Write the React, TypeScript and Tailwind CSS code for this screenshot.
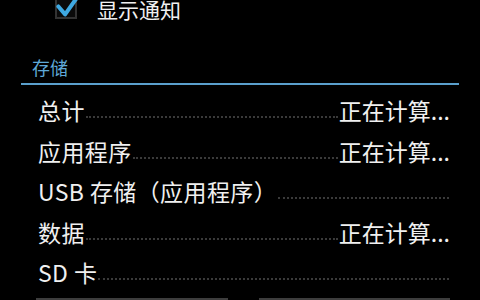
import React from "react";

const rows: { label: string; value: string }[] = [
  { label: "总计", value: "正在计算..." },
  { label: "应用程序", value: "正在计算..." },
  { label: "USB 存储（应用程序）", value: "" },
  { label: "数据", value: "正在计算..." },
  { label: "SD 卡", value: "" },
];

export default function App() {
  return (
    <div
      className="relative w-[480px] h-[300px] overflow-hidden bg-black text-[#f0f0f0]"
      style={{ fontFamily: '"Noto Sans CJK SC", "Noto Sans", sans-serif' }}
    >
      {/* checkbox row (cut at top) */}
      <div className="flex items-center h-[22px] -mt-[2px] pl-[55px]">
        <div className="relative w-[22px] h-[22px] -mt-[2px] border-2 border-[#333] bg-[#0a0a0a]">
          <svg
            viewBox="0 0 24 24"
            className="absolute -left-[2px] -top-[6px] w-[27px] h-[27px]"
          >
            <path
              d="M3 12 L9 19 L21 2"
              fill="none"
              stroke="#3fa9e2"
              strokeWidth="3.6"
              strokeLinecap="round"
              strokeLinejoin="round"
            />
          </svg>
        </div>
        <span className="ml-[20px] text-[21px] leading-[22px]">显示通知</span>
      </div>

      {/* section header */}
      <div className="mt-[36px] pl-[32px] text-[18px] leading-[22px] text-[#5fa9d8]">存储</div>
      <div className="mt-[5px] ml-[21px] w-[438px] h-[2px] bg-[#5a9fcc]" />

      {/* rows */}
      <div className="mt-[0px] pl-[38px] pr-[30px] flex flex-col">
        {rows.map((r, i) => (
          <div key={i} className="flex items-end h-[40.4px]">
            <span className="text-[23px] leading-[30px] whitespace-nowrap tracking-[0.4px]">
              {r.label}
            </span>
            <div className="flex-1 mb-[7px] mx-[1px] border-b-2 border-dotted border-[#3a3a3a]" />
            {r.value && (
              <span className="text-[23px] leading-[30px] whitespace-nowrap">{r.value}</span>
            )}
          </div>
        ))}
      </div>

      {/* bottom buttons (tops only) */}
      <div className="absolute left-[36px] right-[30px] top-[298px] flex gap-[31px]">
        <div className="flex-1 h-[10px] bg-[#3d3d3d]" />
        <div className="flex-1 h-[10px] bg-[#3d3d3d]" />
      </div>
    </div>
  );
}
